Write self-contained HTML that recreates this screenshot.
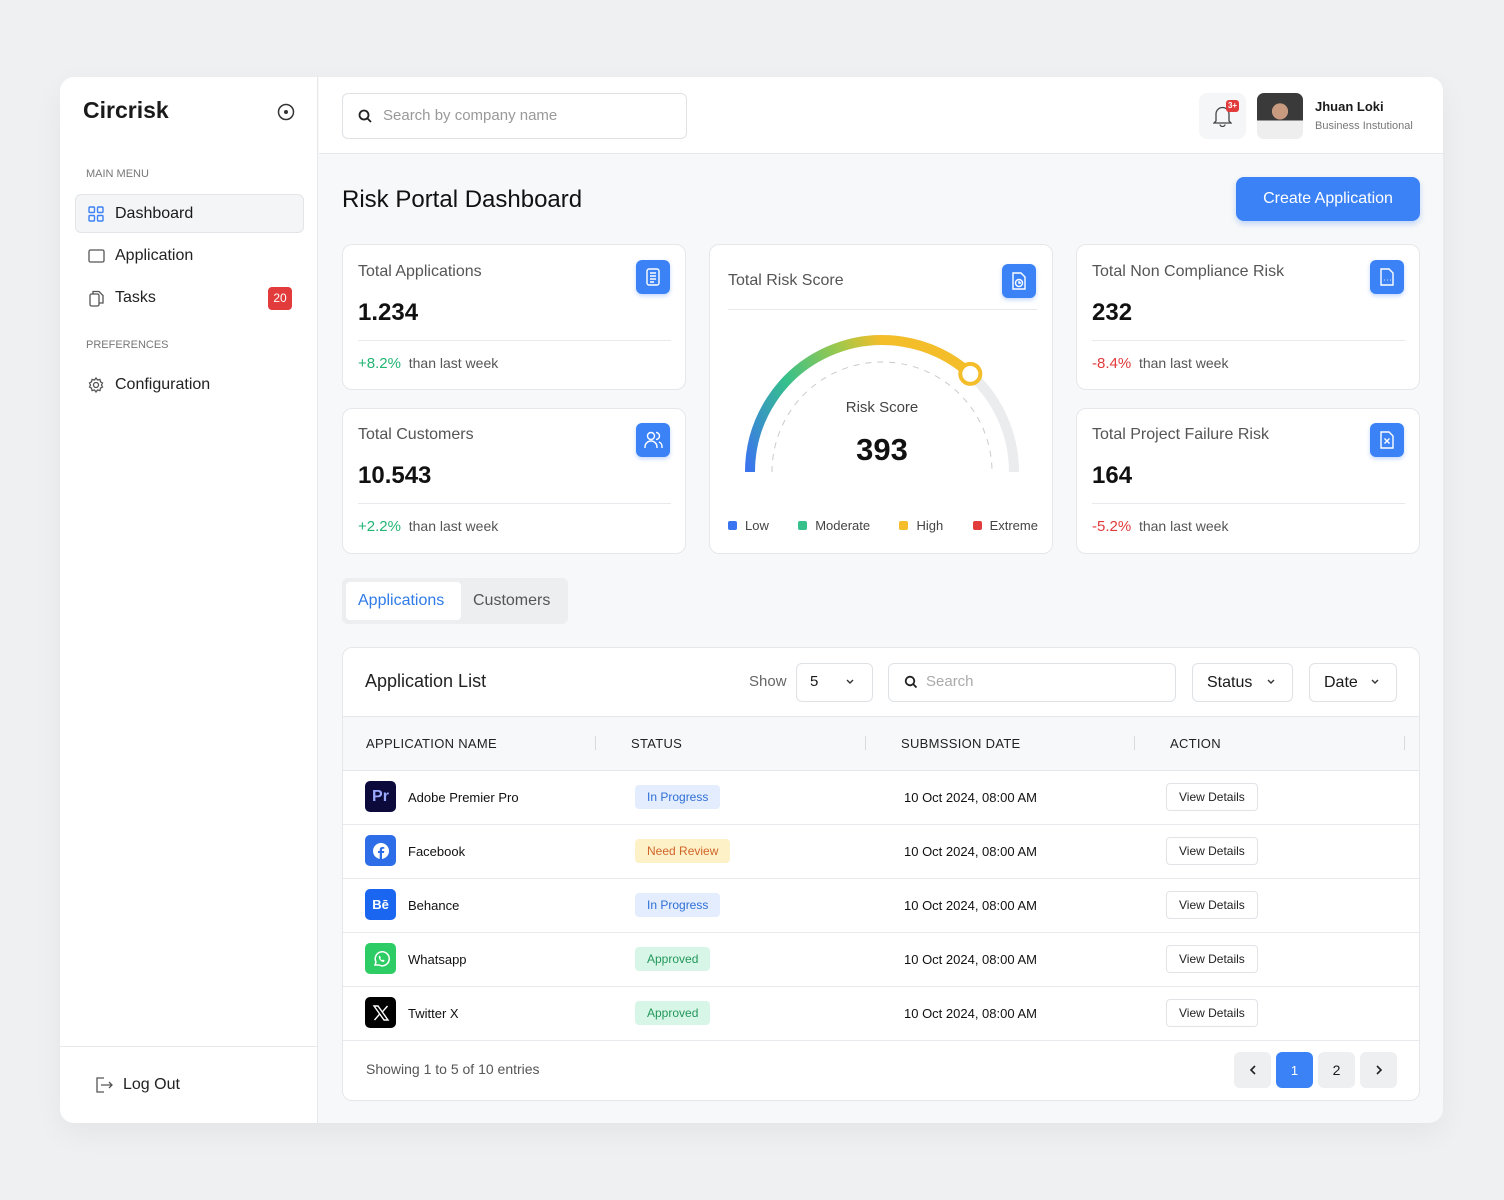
<!DOCTYPE html>
<html><head><meta charset="utf-8">
<style>
*{margin:0;padding:0;box-sizing:border-box}
body{width:1504px;height:1200px;background:#eef0f2;font-family:"Liberation Sans",sans-serif;color:#1a1a1a;position:relative;overflow:hidden}
.a{position:absolute}
.frame{left:60px;top:77px;width:1383px;height:1046px;background:#f7f8f9;border-radius:14px;overflow:hidden;box-shadow:0 10px 30px rgba(0,0,0,0.05)}
.side{left:60px;top:77px;width:258px;height:1046px;background:#fff;border-right:1px solid #e6e8ea;border-radius:14px 0 0 14px}
.card{background:#fff;border:1px solid #e5e7ea;border-radius:10px}
.ic{width:34px;height:34px;border-radius:6px;background:#3b82f6;box-shadow:0 2px 4px rgba(59,130,246,.3)}
.t16{font-size:16px;color:#555}
.val{font-size:24px;font-weight:bold;color:#111}
.ft{font-size:14px;color:#555}
.hr{height:1px;background:#e7e9ec}
.th{font-size:13px;color:#222;letter-spacing:.3px}
.td{font-size:13px;color:#111}
.pill{font-size:12px;border-radius:4px;padding:5px 12px}
.btn{border:1px solid #e1e3e6;border-radius:4px;font-size:12px;padding:6px 12px;background:#fff;color:#222}
.logo{width:31px;height:31px;border-radius:5px;color:#fff;font-weight:bold;display:flex;align-items:center;justify-content:center}
.sel{background:#fff;border:1px solid #dfe2e5;border-radius:6px;height:39px}
.pg{width:37px;height:36px;border-radius:6px;background:#eeeff1;font-size:14px;display:flex;align-items:center;justify-content:center}
</style></head><body>
<div class="a frame"></div>
<div class="a side"></div>
<!-- sidebar -->
<div class="a" style="left:83px;top:97px;font-size:23px;font-weight:bold">Circrisk</div>
<svg class="a" style="left:277px;top:103px" width="18" height="18"><circle cx="9" cy="9" r="7.5" fill="none" stroke="#333" stroke-width="1.5"/><circle cx="9" cy="9" r="2" fill="#333"/></svg>
<div class="a" style="left:86px;top:168px;font-size:11px;color:#777">MAIN MENU</div>
<div class="a" style="left:75px;top:194px;width:229px;height:39px;background:#f4f5f7;border:1px solid #e3e5e8;border-radius:6px"></div>
<svg class="a" style="left:88px;top:206px" width="16" height="16" fill="none" stroke="#3b82f6" stroke-width="1.4"><rect x="1" y="1" width="5.5" height="5.5" rx="1"/><rect x="9.5" y="1" width="5.5" height="5.5" rx="1"/><rect x="1" y="9.5" width="5.5" height="5.5" rx="1"/><rect x="9.5" y="9.5" width="5.5" height="5.5" rx="1"/></svg>
<div class="a" style="left:115px;top:205px;font-size:16px">Dashboard</div>
<svg class="a" style="left:88px;top:249px" width="17" height="14" fill="none" stroke="#555" stroke-width="1.3"><rect x="1" y="1" width="15" height="12" rx="1.5"/></svg>
<div class="a" style="left:115px;top:247px;font-size:16px;color:#222">Application</div>
<svg class="a" style="left:89px;top:290px" width="15" height="17" fill="none" stroke="#555" stroke-width="1.3"><rect x="1" y="4" width="9" height="12" rx="1.5"/><path d="M4 4V1.5h6l4 4V13h-4"/></svg>
<div class="a" style="left:115px;top:289px;font-size:16px;color:#222">Tasks</div>
<div class="a" style="left:268px;top:287px;width:24px;height:23px;background:#e23b3b;border-radius:4px;color:#fff;font-size:12px;text-align:center;line-height:23px">20</div>
<div class="a" style="left:86px;top:339px;font-size:11px;color:#777">PREFERENCES</div>
<svg class="a" style="left:88px;top:377px" width="16" height="16" fill="none" stroke="#555" stroke-width="1.3"><circle cx="8" cy="8" r="2.5"/><path d="M8 1l1.5 2 2.4-.6.6 2.4 2 1.2-1 2 1 2-2 1.2-.6 2.4-2.4-.6L8 15l-1.5-2-2.4.6-.6-2.4-2-1.2 1-2-1-2 2-1.2.6-2.4 2.4.6z"/></svg>
<div class="a" style="left:115px;top:376px;font-size:16px;color:#222">Configuration</div>
<div class="a" style="left:60px;top:1046px;width:258px;height:1px;background:#e6e8ea"></div>
<svg class="a" style="left:95px;top:1077px" width="18" height="16" fill="none" stroke="#555" stroke-width="1.3"><path d="M9 1H2v14h7M6 8h11M14 5l3 3-3 3"/></svg>
<div class="a" style="left:123px;top:1076px;font-size:16px;color:#222">Log Out</div>
<!-- top bar -->
<div class="a" style="left:319px;top:77px;width:1124px;height:77px;background:#fff;border-bottom:1px solid #e6e8ea;border-radius:0 14px 0 0"></div>
<div class="a" style="left:342px;top:93px;width:345px;height:46px;border:1px solid #dfe2e5;border-radius:6px;background:#fff"></div>
<svg class="a" style="left:358px;top:109px" width="14" height="14" fill="none" stroke="#222" stroke-width="1.8"><circle cx="6" cy="6" r="4.5"/><path d="M9.5 9.5L13 13"/></svg>
<div class="a" style="left:383px;top:107px;font-size:15px;color:#999">Search by company name</div>
<div class="a" style="left:1199px;top:93px;width:47px;height:46px;background:#f5f6f7;border-radius:8px"></div>
<svg class="a" style="left:1213px;top:105px" width="19" height="22" fill="none" stroke="#444" stroke-width="1.3"><path d="M3 16V9a6.5 6.5 0 0113 0v7l2 2H1z M7 19.5a2.5 2 0 005 0"/></svg>
<div class="a" style="left:1226px;top:100px;width:13px;height:12px;background:#e23b3b;border-radius:3px;color:#fff;font-size:8px;text-align:center;line-height:12px;font-weight:bold">3+</div>
<div class="a" style="left:1257px;top:93px;width:46px;height:46px;border-radius:7px;background:radial-gradient(circle at 50% 40%,#c89a80 0 22%,transparent 23%),linear-gradient(180deg,#3a3a3a 0 60%,#eee 60%)"></div>
<div class="a" style="left:1315px;top:99px;font-size:13px;font-weight:bold">Jhuan Loki</div>
<div class="a" style="left:1315px;top:120px;font-size:11px;color:#777">Business Instutional</div>
<!-- header -->
<div class="a" style="left:342px;top:186px;font-size:24px;color:#111">Risk Portal Dashboard</div>
<div class="a" style="left:1236px;top:177px;width:184px;height:44px;background:#3b82f6;border-radius:8px;color:#fff;font-size:16px;text-align:center;line-height:44px;box-shadow:0 3px 6px rgba(59,130,246,.3)">Create Application</div>
<!-- stat cards -->
<div class="a card" style="left:342px;top:244px;width:344px;height:146px"></div>
<div class="a t16" style="left:358px;top:263px">Total Applications</div>
<div class="a val" style="left:358px;top:299px">1.234</div>
<div class="a hr" style="left:358px;top:340px;width:313px"></div>
<div class="a ft" style="left:358px;top:355px"><span style="color:#22b573;font-size:15px">+8.2%</span>&nbsp; than last week</div>
<div class="a ic" style="left:636px;top:260px"><svg width="34" height="34" fill="none" stroke="#fff" stroke-width="1.4"><rect x="11" y="9" width="12" height="16" rx="2"/><path d="M14 13h6M14 16h6M14 19h6M14 22h4"/></svg></div>

<div class="a card" style="left:342px;top:408px;width:344px;height:146px"></div>
<div class="a t16" style="left:358px;top:426px">Total Customers</div>
<div class="a val" style="left:358px;top:462px">10.543</div>
<div class="a hr" style="left:358px;top:503px;width:313px"></div>
<div class="a ft" style="left:358px;top:518px"><span style="color:#22b573;font-size:15px">+2.2%</span>&nbsp; than last week</div>
<div class="a ic" style="left:636px;top:423px"><svg width="34" height="34" fill="none" stroke="#fff" stroke-width="1.4"><circle cx="15" cy="13" r="3.5"/><path d="M9 25v-1a6 6 0 0112 0v1M20 9.5a3.5 3.5 0 010 7M23 19a5 5 0 013 5v1"/></svg></div>

<div class="a card" style="left:1076px;top:244px;width:344px;height:146px"></div>
<div class="a t16" style="left:1092px;top:263px">Total Non Compliance Risk</div>
<div class="a val" style="left:1092px;top:299px">232</div>
<div class="a hr" style="left:1092px;top:340px;width:313px"></div>
<div class="a ft" style="left:1092px;top:355px"><span style="color:#e23b3b;font-size:15px">-8.4%</span>&nbsp; than last week</div>
<div class="a ic" style="left:1370px;top:260px"><svg width="34" height="34" fill="none" stroke="#fff" stroke-width="1.4"><path d="M11 9h8l4 4v12H11z"/><path d="M14 20h.5M17 20h.5M20 20h.5"/></svg></div>

<div class="a card" style="left:1076px;top:408px;width:344px;height:146px"></div>
<div class="a t16" style="left:1092px;top:426px">Total Project Failure Risk</div>
<div class="a val" style="left:1092px;top:462px">164</div>
<div class="a hr" style="left:1092px;top:503px;width:313px"></div>
<div class="a ft" style="left:1092px;top:518px"><span style="color:#e23b3b;font-size:15px">-5.2%</span>&nbsp; than last week</div>
<div class="a ic" style="left:1370px;top:423px"><svg width="34" height="34" fill="none" stroke="#fff" stroke-width="1.4"><path d="M11 9h8l4 4v12H11z"/><path d="M14.5 15.5l5 5M19.5 15.5l-5 5"/></svg></div>

<!-- risk score card -->
<div class="a card" style="left:709px;top:244px;width:344px;height:310px"></div>
<div class="a t16" style="left:728px;top:272px">Total Risk Score</div>
<div class="a ic" style="left:1002px;top:264px"><svg width="34" height="34" fill="none" stroke="#fff" stroke-width="1.4"><path d="M11 9h8l4 4v12H11z"/><circle cx="17" cy="19" r="3.5"/><path d="M17 17v2h2"/></svg></div>
<div class="a hr" style="left:728px;top:309px;width:309px"></div>
<svg class="a" style="left:709px;top:300px" width="344" height="190">
<defs><linearGradient id="g" gradientUnits="userSpaceOnUse" x1="40" y1="172" x2="260" y2="60"><stop offset="0" stop-color="#3b74f0"/><stop offset=".3" stop-color="#35c08c"/><stop offset=".55" stop-color="#9cc84c"/><stop offset=".72" stop-color="#f4bd2a"/><stop offset="1" stop-color="#f4bd2a"/></linearGradient></defs>
<path d="M41 172A132 132 0 0 1 305 172" fill="none" stroke="#ebecee" stroke-width="10"/>
<path d="M41 172A132 132 0 0 1 261.3 73.9" fill="none" stroke="url(#g)" stroke-width="10"/>
<path d="M63 172A110 110 0 0 1 283 172" fill="none" stroke="#c8cacd" stroke-width="1" stroke-dasharray="6 6"/>
<circle cx="261.3" cy="73.9" r="10" fill="#fff" stroke="#f4bd2a" stroke-width="4"/>
</svg>
<div class="a" style="left:782px;top:399px;width:200px;text-align:center;font-size:15px;color:#444">Risk Score</div>
<div class="a" style="left:782px;top:432px;width:200px;text-align:center;font-size:31px;font-weight:bold;color:#111">393</div>
<div class="a" style="left:728px;top:518px;font-size:13px;color:#444;display:flex;gap:0;width:310px;justify-content:space-between">
<span><i style="display:inline-block;width:9px;height:9px;background:#3b74f0;border-radius:2px;margin-right:8px"></i>Low</span>
<span><i style="display:inline-block;width:9px;height:9px;background:#35c08c;border-radius:2px;margin-right:8px"></i>Moderate</span>
<span><i style="display:inline-block;width:9px;height:9px;background:#f4bd2a;border-radius:2px;margin-right:8px"></i>High</span>
<span><i style="display:inline-block;width:9px;height:9px;background:#e23b3b;border-radius:2px;margin-right:8px"></i>Extreme</span></div>

<!-- tabs -->
<div class="a" style="left:342px;top:578px;width:226px;height:46px;background:#eceef0;border-radius:6px"></div>
<div class="a" style="left:346px;top:582px;width:115px;height:38px;background:#fff;border-radius:4px"></div>
<div class="a" style="left:358px;top:592px;font-size:16px;color:#2f7be8">Applications</div>
<div class="a" style="left:473px;top:592px;font-size:16px;color:#555">Customers</div>

<!-- table card -->
<div class="a card" style="left:342px;top:647px;width:1078px;height:454px;overflow:hidden">
<div class="a" style="left:0;top:68px;width:1078px;height:55px;background:#f7f8f9;border-top:1px solid #e5e7ea;border-bottom:1px solid #e5e7ea"></div>
</div>
<div class="a" style="left:365px;top:671px;font-size:18px;color:#222">Application List</div>
<div class="a" style="left:749px;top:673px;font-size:15px;color:#666">Show</div>
<div class="a sel" style="left:796px;top:663px;width:77px"></div>
<div class="a" style="left:810px;top:673px;font-size:15px">5</div>
<svg class="a" style="left:845px;top:678px" width="10" height="8" fill="none" stroke="#333" stroke-width="1.4"><path d="M2 2l3 3 3-3"/></svg>
<div class="a sel" style="left:888px;top:663px;width:288px"></div>
<svg class="a" style="left:904px;top:675px" width="14" height="14" fill="none" stroke="#222" stroke-width="1.8"><circle cx="6" cy="6" r="4.3"/><path d="M9.3 9.3L12.5 12.5"/></svg>
<div class="a" style="left:926px;top:673px;font-size:15px;color:#aaa">Search</div>
<div class="a sel" style="left:1192px;top:663px;width:101px"></div>
<div class="a" style="left:1207px;top:674px;font-size:16px">Status</div>
<svg class="a" style="left:1266px;top:678px" width="10" height="8" fill="none" stroke="#333" stroke-width="1.4"><path d="M2 2l3 3 3-3"/></svg>
<div class="a sel" style="left:1309px;top:663px;width:88px"></div>
<div class="a" style="left:1324px;top:674px;font-size:16px">Date</div>
<svg class="a" style="left:1370px;top:678px" width="10" height="8" fill="none" stroke="#333" stroke-width="1.4"><path d="M2 2l3 3 3-3"/></svg>

<div class="a th" style="left:366px;top:736px">APPLICATION NAME</div>
<div class="a th" style="left:631px;top:736px">STATUS</div>
<div class="a th" style="left:901px;top:736px">SUBMSSION DATE</div>
<div class="a th" style="left:1170px;top:736px">ACTION</div>
<div class="a" style="left:595px;top:736px;width:1px;height:14px;background:#d8dadd"></div>
<div class="a" style="left:865px;top:736px;width:1px;height:14px;background:#d8dadd"></div>
<div class="a" style="left:1134px;top:736px;width:1px;height:14px;background:#d8dadd"></div>
<div class="a" style="left:1404px;top:736px;width:1px;height:14px;background:#d8dadd"></div>

<!-- rows -->
<div class="a hr" style="left:343px;top:824px;width:1076px"></div>
<div class="a hr" style="left:343px;top:878px;width:1076px"></div>
<div class="a hr" style="left:343px;top:932px;width:1076px"></div>
<div class="a hr" style="left:343px;top:986px;width:1076px"></div>
<div class="a hr" style="left:343px;top:1040px;width:1076px"></div>

<div class="a logo" style="left:365px;top:781px;background:#0b0a3a;color:#9aa8ff;font-size:16px">Pr</div>
<div class="a logo" style="left:365px;top:835px;background:#2d6ee8"><svg width="18" height="18"><circle cx="9" cy="9" r="8" fill="#fff"/><path d="M10 17v-6h2l.3-2H10V7.8c0-.6.2-1 1-1h1.3V5.1c-.3 0-1-.1-1.8-.1-1.8 0-2.8 1-2.8 2.9V9H6v2h1.7v6z" fill="#2d6ee8"/></svg></div>
<div class="a logo" style="left:365px;top:889px;background:#1a66f0;font-size:13px">Bē</div>
<div class="a logo" style="left:365px;top:943px;background:#2ecc64"><svg width="18" height="18" fill="none" stroke="#fff" stroke-width="1.5"><path d="M3 15l1-3a7 7 0 113 3z"/><path d="M7 6.5c0 3 2 5 4.5 5.3l1-1-1.5-1-1 .6c-1-.5-1.6-1.2-2-2l.6-1-1-1.5z" fill="#fff" stroke-width=".5"/></svg></div>
<div class="a logo" style="left:365px;top:997px;background:#000"><svg width="18" height="18" stroke="#fff" stroke-width="1.4" fill="none"><path d="M2 2h4l10 14h-4z"/><path d="M15.5 2L10 8.3M2.5 16L8 9.7"/></svg></div>

<div class="a td" style="left:408px;top:790px">Adobe Premier Pro</div>
<div class="a td" style="left:408px;top:844px">Facebook</div>
<div class="a td" style="left:408px;top:898px">Behance</div>
<div class="a td" style="left:408px;top:952px">Whatsapp</div>
<div class="a td" style="left:408px;top:1006px">Twitter X</div>

<div class="a pill" style="left:635px;top:785px;background:#e3edfd;color:#2f6fd6">In Progress</div>
<div class="a pill" style="left:635px;top:839px;background:#fdf1c8;color:#d0652a">Need Review</div>
<div class="a pill" style="left:635px;top:893px;background:#e3edfd;color:#2f6fd6">In Progress</div>
<div class="a pill" style="left:635px;top:947px;background:#d8f6e7;color:#23975b">Approved</div>
<div class="a pill" style="left:635px;top:1001px;background:#d8f6e7;color:#23975b">Approved</div>

<div class="a td" style="left:904px;top:790px">10 Oct 2024, 08:00 AM</div>
<div class="a td" style="left:904px;top:844px">10 Oct 2024, 08:00 AM</div>
<div class="a td" style="left:904px;top:898px">10 Oct 2024, 08:00 AM</div>
<div class="a td" style="left:904px;top:952px">10 Oct 2024, 08:00 AM</div>
<div class="a td" style="left:904px;top:1006px">10 Oct 2024, 08:00 AM</div>

<div class="a btn" style="left:1166px;top:783px">View Details</div>
<div class="a btn" style="left:1166px;top:837px">View Details</div>
<div class="a btn" style="left:1166px;top:891px">View Details</div>
<div class="a btn" style="left:1166px;top:945px">View Details</div>
<div class="a btn" style="left:1166px;top:999px">View Details</div>

<div class="a" style="left:366px;top:1061px;font-size:14px;color:#555">Showing 1 to 5 of 10 entries</div>
<div class="a pg" style="left:1234px;top:1052px"><svg width="10" height="12" fill="none" stroke="#222" stroke-width="1.6"><path d="M7 2L3 6l4 4"/></svg></div>
<div class="a pg" style="left:1276px;top:1052px;background:#3b82f6;color:#fff;font-size:13px">1</div>
<div class="a pg" style="left:1318px;top:1052px">2</div>
<div class="a pg" style="left:1360px;top:1052px"><svg width="10" height="12" fill="none" stroke="#222" stroke-width="1.6"><path d="M3 2l4 4-4 4"/></svg></div>
</body></html>
